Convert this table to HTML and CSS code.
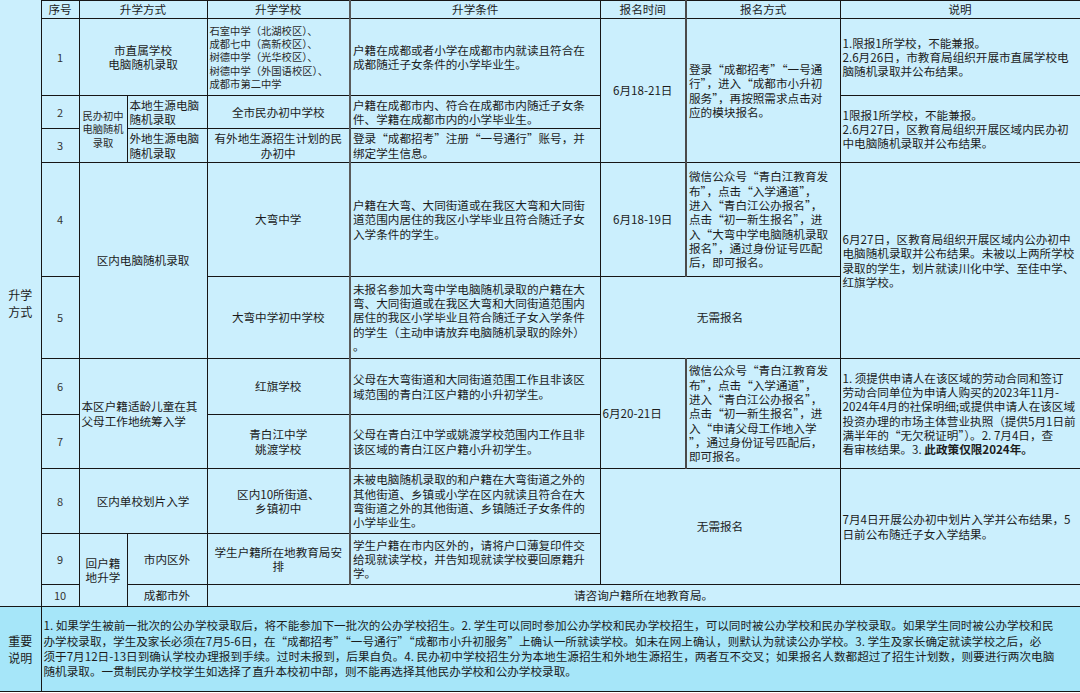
FILE: index.html
```html
<!DOCTYPE html>
<html lang="zh-CN">
<head>
<meta charset="utf-8">
<title>升学方式</title>
<link rel="stylesheet" href="styles.css">
</head>
<body>
<table class="t">
  <colgroup>
    <col class="c0"><col class="c1"><col class="c2a"><col class="c2b"><col class="c3"><col class="c4"><col class="c5"><col class="c6"><col class="c7">
  </colgroup>
  <tr class="rh">
    <td class="side" rowspan="11">升学<br>方式</td>
    <th>序号</th>
    <th colspan="2">升学方式</th>
    <th>升学学校</th>
    <th class="bl">升学条件</th>
    <th>报名时间</th>
    <th class="bl2">报名方式</th>
    <th>说明</th>
  </tr>
  <tr class="r1">
    <td class="num">1</td>
    <td class="ctr" colspan="2">市直属学校<br>电脑随机录取</td>
    <td class="small">石室中学（北湖校区）、<br>成都七中（高新校区）、<br>树德中学（光华校区）、<br>树德中学（外国语校区）、<br>成都市第二中学</td>
    <td class="bl">户籍在成都或者小学在成都市内就读且符合在<br>成都随迁子女条件的小学毕业生。</td>
    <td class="ctr" rowspan="3">6月18-21日</td>
    <td class="bl2" rowspan="3">登录“成都招考”“一号通<br>行”，进入“成都市小升初<br>服务”，再按照需求点击对<br>应的模块报名。</td>
    <td>1.限报1所学校，不能兼报。<br>2.6月26日，市教育局组织开展市直属学校电<br>脑随机录取并公布结果。</td>
  </tr>
  <tr class="r2">
    <td class="num">2</td>
    <td class="ctr small" rowspan="2">民办初中<br>电脑随机<br>录取</td>
    <td>本地生源电脑<br>随机录取</td>
    <td class="ctr">全市民办初中学校</td>
    <td class="bl">户籍在成都市内、符合在成都市内随迁子女条<br>件、学籍在成都市内的小学毕业生。</td>
    <td rowspan="2">1限报1所学校，不能兼报。<br>2.6月27日，区教育局组织开展区域内民办初<br>中电脑随机录取并公布结果。</td>
  </tr>
  <tr class="r3">
    <td class="num">3</td>
    <td>外地生源电脑<br>随机录取</td>
    <td class="ctr">有外地生源招生计划的民<br>办初中</td>
    <td class="bl">登录“成都招考”注册“一号通行”账号，并<br>绑定学生信息。</td>
  </tr>
  <tr class="r4">
    <td class="num">4</td>
    <td class="ctr" colspan="2" rowspan="2">区内电脑随机录取</td>
    <td class="ctr">大弯中学</td>
    <td class="bl">户籍在大弯、大同街道或在我区大弯和大同街<br>道范围内居住的我区小学毕业且符合随迁子女<br>入学条件的学生。</td>
    <td class="ctr">6月18-19日</td>
    <td class="bl2">微信公众号“青白江教育发<br>布”，点击“入学通道”，<br>进入“青白江公办报名”，<br>点击“初一新生报名”，进<br>入“大弯中学电脑随机录取<br>报名”，通过身份证号匹配<br>后，即可报名。</td>
    <td rowspan="2">6月27日，区教育局组织开展区域内公办初中<br>电脑随机录取并公布结果。未被以上两所学校<br>录取的学生，划片就读川化中学、至佳中学、<br>红旗学校。</td>
  </tr>
  <tr class="r5">
    <td class="num">5</td>
    <td class="ctr">大弯中学初中学校</td>
    <td class="bl">未报名参加大弯中学电脑随机录取的户籍在大<br>弯、大同街道或在我区大弯和大同街道范围内<br>居住的我区小学毕业且符合随迁子女入学条件<br>的学生（主动申请放弃电脑随机录取的除外）<br>。</td>
    <td class="ctr" colspan="2">无需报名</td>
  </tr>
  <tr class="r6">
    <td class="num">6</td>
    <td colspan="2" rowspan="2">本区户籍适龄儿童在其<br>父母工作地统筹入学</td>
    <td class="ctr">红旗学校</td>
    <td class="bl">父母在大弯街道和大同街道范围工作且非该区<br>域范围的青白江区户籍的小升初学生。</td>
    <td rowspan="2">6月20-21日</td>
    <td class="bl2" rowspan="2">微信公众号“青白江教育发<br>布”，点击“入学通道”，<br>进入“青白江公办报名”，<br>点击“初一新生报名”，进<br>入“申请父母工作地入学<br>”，通过身份证号匹配后，<br>即可报名。</td>
    <td rowspan="2">1. 须提供申请人在该区域的劳动合同和签订<br>劳动合同单位为申请人购买的2023年11月-<br>2024年4月的社保明细;或提供申请人在该区域<br>投资办理的市场主体营业执照（提供5月1日前<br>满半年的“无欠税证明”）。2. 7月4日，查<br>看审核结果。3. <b>此政策仅限2024年。</b></td>
  </tr>
  <tr class="r7">
    <td class="num">7</td>
    <td class="ctr">青白江中学<br>姚渡学校</td>
    <td class="bl">父母在青白江中学或姚渡学校范围内工作且非<br>该区域的青白江区户籍小升初学生。</td>
  </tr>
  <tr class="r8">
    <td class="num">8</td>
    <td class="ctr" colspan="2">区内单校划片入学</td>
    <td class="ctr">区内10所街道、<br>乡镇初中</td>
    <td class="bl">未被电脑随机录取的和户籍在大弯街道之外的<br>其他街道、乡镇或小学在区内就读且符合在大<br>弯街道之外的其他街道、乡镇随迁子女条件的<br>小学毕业生。</td>
    <td class="ctr" colspan="2" rowspan="2">无需报名</td>
    <td rowspan="2">7月4日开展公办初中划片入学并公布结果，5<br>日前公布随迁子女入学结果。</td>
  </tr>
  <tr class="r9">
    <td class="num">9</td>
    <td class="ctr" rowspan="2">回户籍<br>地升学</td>
    <td class="ctr">市内区外</td>
    <td class="ctr">学生户籍所在地教育局安<br>排</td>
    <td class="bl">学生户籍在市内区外的，请将户口薄复印件交<br>给现就读学校，并告知现就读学校要回原籍升<br>学。</td>
  </tr>
  <tr class="r10">
    <td class="num">10</td>
    <td class="ctr">成都市外</td>
    <td class="ctr" colspan="5">请咨询户籍所在地教育局。</td>
  </tr>
  <tr class="rn">
    <td class="side note-side">重要<br>说明</td>
    <td class="note" colspan="8">1. 如果学生被前一批次的公办学校录取后，将不能参加下一批次的公办学校招生。2. 学生可以同时参加公办学校和民办学校招生，可以同时被公办学校和民办学校录取。如果学生同时被公办学校和民<br>办学校录取，学生及家长必须在7月5-6日，在“成都招考”“一号通行”“成都市小升初服务”上确认一所就读学校。如未在网上确认，则默认为就读公办学校。3. 学生及家长确定就读学校之后，必<br>须于7月12日-13日到确认学校办理报到手续。过时未报到，后果自负。4. 民办初中学校招生分为本地生源招生和外地生源招生，两者互不交叉；如果报名人数都超过了招生计划数，则要进行两次电脑<br>随机录取。一贯制民办学校学生如选择了直升本校初中部，则不能再选择其他民办学校和公办学校录取。</td>
  </tr>
</table>
</body>
</html>
```
FILE: styles.css
```css
html, body {
  margin: 0;
  padding: 0;
  background: #ffffff;
}

.t {
  width: 1080px;
  border-collapse: collapse;
  table-layout: fixed;
  background: #cbeffd;
  color: #1c1c1c;
  font-family: "Noto Sans CJK SC", "Noto Sans", sans-serif;
  font-size: 11.6px;
  line-height: 14.3px;
}

.c0 { width: 41px; }
.c1 { width: 38px; }
.c2a { width: 48px; }
.c2b { width: 80px; }
.c3 { width: 143px; }
.c4 { width: 250px; }
.c5 { width: 86px; }
.c6 { width: 154px; }
.c7 { width: 240px; }

.t th,
.t td {
  border: 1px solid #161616;
  padding: 0 2px;
  vertical-align: middle;
  text-align: left;
  white-space: nowrap;
  font-weight: normal;
}

.t th {
  text-align: center;
}

.rh { height: 18px; }
.r1 { height: 77px; }
.r2 { height: 33px; }
.r3 { height: 34px; }
.r4 { height: 114px; }
.r5 { height: 82px; }
.r6 { height: 56px; }
.r7 { height: 54px; }
.r8 { height: 65px; }
.r9 { height: 51px; }
.r10 { height: 22px; }
.rn { height: 85px; }

.t .side {
  border-top: none;
  border-left: none;
  text-align: center;
  font-size: 12px;
  line-height: 17px;
  padding: 0;
}

.t .num {
  text-align: center;
  font-size: 11px;
  color: #333333;
}

.t .ctr {
  text-align: center;
}

.t .small {
  font-size: 10.3px;
  line-height: 13.3px;
  color: #2a2a2a;
}

.t .bl {
  border-left: 2px solid #5a5a5a;
}

.t .bl2 {
  border-left: 2px solid #4a4a4a;
}

.t .note-side {
  background: #a6e6f9;
}

.t .note {
  background: #a6e6f9;
  line-height: 15.3px;
  padding: 0 2px;
}
```
